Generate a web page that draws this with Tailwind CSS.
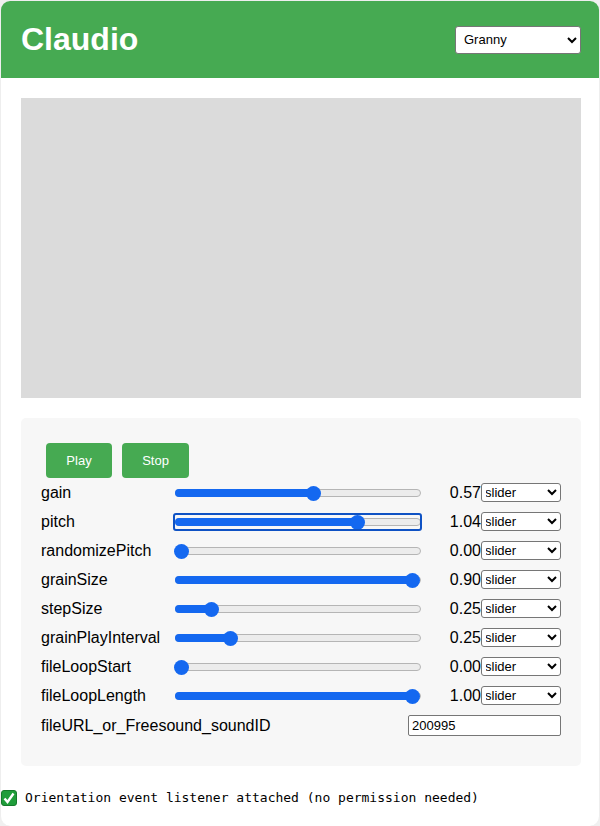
<!doctype html>
<html lang="en">
<head>
<meta charset="utf-8">
<title>Claudio</title>
<script src="https://cdn.jsdelivr.net/npm/@tailwindcss/browser@4"></script>
</head>
<body class="bg-[#f0f0f0] font-['Liberation_Sans',Arial,sans-serif] text-black">
<div class="w-[600px] h-[826px] overflow-hidden bg-white rounded-[10px] border-l border-r border-t border-[#eeeeee] flex flex-col">
  <header class="h-[77px] shrink-0 bg-[#46aa52] flex items-center justify-between pl-[20px] pr-[18px]">
    <h1 class="text-[32px] leading-[37px] font-bold text-white">Claudio</h1>
    <select class="w-[126px] h-[28px] bg-white border border-[#767676] rounded-[3px] text-[13px] pl-[4px] text-black"><option>Granny</option></select>
  </header>
  <main class="flex flex-col pl-[20px] pr-[18px] pt-[20px]">
    <div class="h-[300px] bg-[#dbdbdb]"></div>
    <section class="mt-[20px] h-[348px] bg-[#f7f7f7] rounded-[5px] pl-[20px] pr-[20px] pt-[25px]">
      <div class="flex gap-[10px] pl-[5px]">
        <button class="w-[66px] h-[35px] bg-[#46aa52] text-white text-[13px] rounded-[4px]">Play</button>
        <button class="w-[67px] h-[35px] bg-[#46aa52] text-white text-[13px] rounded-[4px]">Stop</button>
      </div>
      <div class="flex flex-col text-[16px]">
        <div class="h-[29px] flex items-start">
          <span class="w-[132px] leading-[29px]">gain</span>
          <div class="relative w-[249px] h-[18px] mt-[6px]">
            <div class="absolute left-[2px] top-[5px] w-[246px] h-[8px] rounded-full bg-[#ececec] border border-[#b5b5b5]"></div>
            <div class="absolute left-[2px] top-[5px] w-[138px] h-[8px] rounded-full bg-[#1468f0]"></div>
            <div class="absolute left-[133px] top-[2px] w-[15px] h-[15px] rounded-full bg-[#1468f0]"></div>
          </div>
          <span class="w-[59px] text-right leading-[29px]">0.57</span>
          <select class="w-[80px] h-[19px] mt-[5px] bg-white border border-[#767676] rounded-[3px] text-[13px] pl-0 indent-[-1px]"><option>slider</option></select>
        </div>
        <div class="h-[29px] flex items-start">
          <span class="w-[132px] leading-[29px]">pitch</span>
          <div class="relative w-[249px] h-[18px] mt-[6px]">
            <div class="absolute left-[2px] top-[5px] w-[246px] h-[8px] rounded-full bg-[#ececec] border border-[#b5b5b5]"></div>
            <div class="absolute left-[2px] top-[5px] w-[182px] h-[8px] rounded-full bg-[#1468f0]"></div>
            <div class="absolute left-[177px] top-[2px] w-[15px] h-[15px] rounded-full bg-[#1468f0]"></div>
            <div class="absolute inset-0 border-2 border-[#0f52c4] rounded-[3px]"></div>
          </div>
          <span class="w-[59px] text-right leading-[29px]">1.04</span>
          <select class="w-[80px] h-[19px] mt-[5px] bg-white border border-[#767676] rounded-[3px] text-[13px] pl-0 indent-[-1px]"><option>slider</option></select>
        </div>
        <div class="h-[29px] flex items-start">
          <span class="w-[132px] leading-[29px]">randomizePitch</span>
          <div class="relative w-[249px] h-[18px] mt-[6px]">
            <div class="absolute left-[2px] top-[5px] w-[246px] h-[8px] rounded-full bg-[#ececec] border border-[#b5b5b5]"></div>
            <div class="absolute left-[1px] top-[2px] w-[15px] h-[15px] rounded-full bg-[#1468f0]"></div>
          </div>
          <span class="w-[59px] text-right leading-[29px]">0.00</span>
          <select class="w-[80px] h-[19px] mt-[5px] bg-white border border-[#767676] rounded-[3px] text-[13px] pl-0 indent-[-1px]"><option>slider</option></select>
        </div>
        <div class="h-[29px] flex items-start">
          <span class="w-[132px] leading-[29px]">grainSize</span>
          <div class="relative w-[249px] h-[18px] mt-[6px]">
            <div class="absolute left-[2px] top-[5px] w-[246px] h-[8px] rounded-full bg-[#ececec] border border-[#b5b5b5]"></div>
            <div class="absolute left-[2px] top-[5px] w-[237px] h-[8px] rounded-full bg-[#1468f0]"></div>
            <div class="absolute left-[232px] top-[2px] w-[15px] h-[15px] rounded-full bg-[#1468f0]"></div>
          </div>
          <span class="w-[59px] text-right leading-[29px]">0.90</span>
          <select class="w-[80px] h-[19px] mt-[5px] bg-white border border-[#767676] rounded-[3px] text-[13px] pl-0 indent-[-1px]"><option>slider</option></select>
        </div>
        <div class="h-[29px] flex items-start">
          <span class="w-[132px] leading-[29px]">stepSize</span>
          <div class="relative w-[249px] h-[18px] mt-[6px]">
            <div class="absolute left-[2px] top-[5px] w-[246px] h-[8px] rounded-full bg-[#ececec] border border-[#b5b5b5]"></div>
            <div class="absolute left-[2px] top-[5px] w-[36px] h-[8px] rounded-full bg-[#1468f0]"></div>
            <div class="absolute left-[31px] top-[2px] w-[15px] h-[15px] rounded-full bg-[#1468f0]"></div>
          </div>
          <span class="w-[59px] text-right leading-[29px]">0.25</span>
          <select class="w-[80px] h-[19px] mt-[5px] bg-white border border-[#767676] rounded-[3px] text-[13px] pl-0 indent-[-1px]"><option>slider</option></select>
        </div>
        <div class="h-[29px] flex items-start">
          <span class="w-[132px] leading-[29px]">grainPlayInterval</span>
          <div class="relative w-[249px] h-[18px] mt-[6px]">
            <div class="absolute left-[2px] top-[5px] w-[246px] h-[8px] rounded-full bg-[#ececec] border border-[#b5b5b5]"></div>
            <div class="absolute left-[2px] top-[5px] w-[55px] h-[8px] rounded-full bg-[#1468f0]"></div>
            <div class="absolute left-[50px] top-[2px] w-[15px] h-[15px] rounded-full bg-[#1468f0]"></div>
          </div>
          <span class="w-[59px] text-right leading-[29px]">0.25</span>
          <select class="w-[80px] h-[19px] mt-[5px] bg-white border border-[#767676] rounded-[3px] text-[13px] pl-0 indent-[-1px]"><option>slider</option></select>
        </div>
        <div class="h-[29px] flex items-start">
          <span class="w-[132px] leading-[29px]">fileLoopStart</span>
          <div class="relative w-[249px] h-[18px] mt-[6px]">
            <div class="absolute left-[2px] top-[5px] w-[246px] h-[8px] rounded-full bg-[#ececec] border border-[#b5b5b5]"></div>
            <div class="absolute left-[1px] top-[2px] w-[15px] h-[15px] rounded-full bg-[#1468f0]"></div>
          </div>
          <span class="w-[59px] text-right leading-[29px]">0.00</span>
          <select class="w-[80px] h-[19px] mt-[5px] bg-white border border-[#767676] rounded-[3px] text-[13px] pl-0 indent-[-1px]"><option>slider</option></select>
        </div>
        <div class="h-[29px] flex items-start">
          <span class="w-[132px] leading-[29px]">fileLoopLength</span>
          <div class="relative w-[249px] h-[18px] mt-[6px]">
            <div class="absolute left-[2px] top-[5px] w-[246px] h-[8px] rounded-full bg-[#ececec] border border-[#b5b5b5]"></div>
            <div class="absolute left-[2px] top-[5px] w-[237px] h-[8px] rounded-full bg-[#1468f0]"></div>
            <div class="absolute left-[232px] top-[2px] w-[15px] h-[15px] rounded-full bg-[#1468f0]"></div>
          </div>
          <span class="w-[59px] text-right leading-[29px]">1.00</span>
          <select class="w-[80px] h-[19px] mt-[5px] bg-white border border-[#767676] rounded-[3px] text-[13px] pl-0 indent-[-1px]"><option>slider</option></select>
        </div>
        <div class="h-[31px] flex items-center justify-between">
          <span>fileURL_or_Freesound_soundID</span>
          <input type="text" value="200995" class="w-[153px] h-[21px] bg-white border border-[#767676] rounded-[2px] text-[13px] px-[3px] outline-none">
        </div>
      </div>
    </section>
  </main>
  <div class="mt-[23px] flex items-center gap-[8px]">
    <svg class="w-[16px] h-[16px] shrink-0" viewBox="0 0 16 16" aria-hidden="true"><rect x="0.5" y="0.5" width="15" height="15" rx="2.5" fill="#1f9d3a" stroke="#157a2b"/><path d="M3.5 8.5 L6.5 12 L12.5 3.5" fill="none" stroke="#fff" stroke-width="2.4"/></svg>
    <span class="font-['DejaVu_Sans_Mono',monospace] text-[13px] leading-[18px] whitespace-pre">Orientation event listener attached (no permission needed)</span>
  </div>
</div>
</body>
</html>
